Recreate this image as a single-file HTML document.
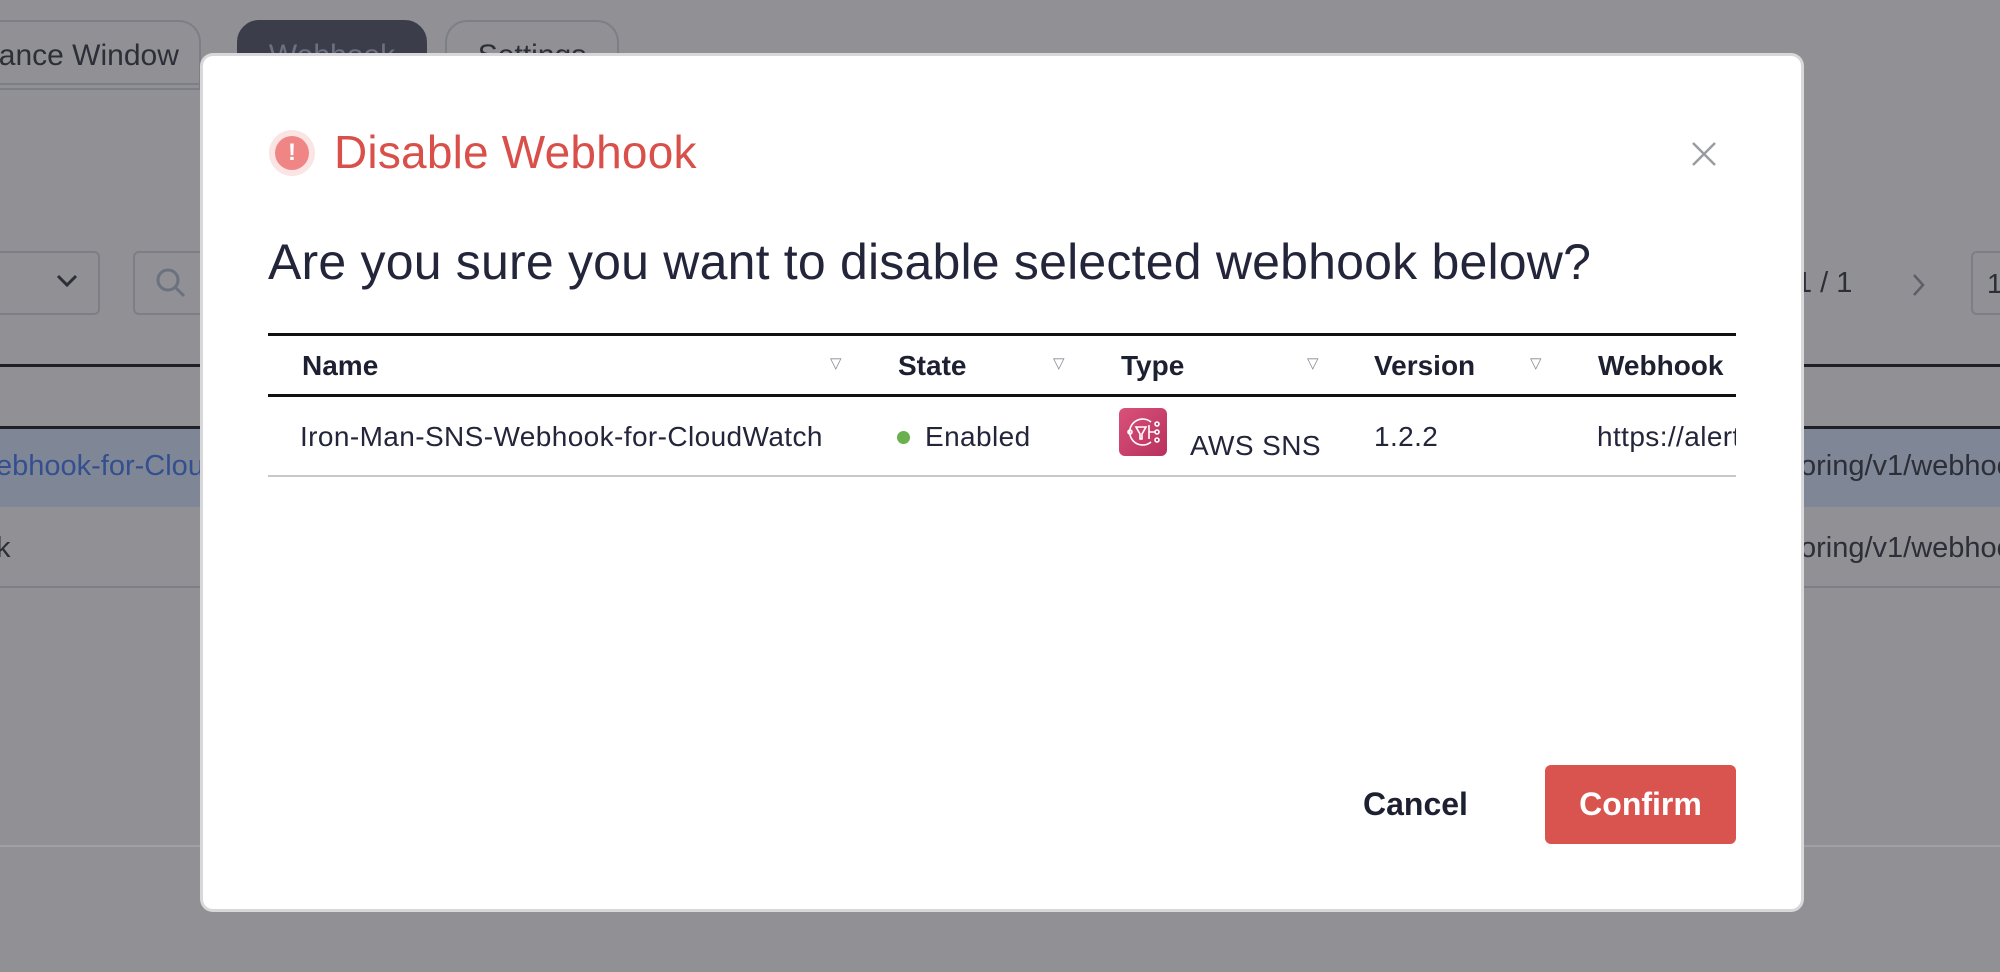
<!DOCTYPE html>
<html><head><meta charset="utf-8"><style>
*{margin:0;padding:0;box-sizing:border-box}
body{width:2000px;height:972px;overflow:hidden;background:#909095;font-family:"Liberation Sans",sans-serif;position:relative;color:#23263a}
.a{position:absolute;white-space:nowrap}
.tab{position:absolute;top:20px;height:70px;border:2px solid #7d7f86;border-radius:22px 22px 0 0;font-size:30px;color:#2c2e38;padding:17px 0 0 0;text-align:center}
.bgline{position:absolute;left:0;width:2000px}
.modal{position:absolute;left:203px;top:56px;width:1598px;height:853px;background:#fff;border-radius:10px;box-shadow:0 0 0 3px #d8d8da}
.th{position:absolute;top:350px;font-size:28px;font-weight:bold;color:#1d2030}
.tri{position:absolute;top:354px;font-size:15px;color:#8a8c96}
.td{position:absolute;top:421px;font-size:28px;color:#23263a;letter-spacing:0.4px}
</style></head><body>
<div class="tab" style="left:-40px;width:241px;border-color:#7d7f86">nance Window</div>
<div class="tab" style="left:237px;width:190px;background:#3b3d4a;border-color:#3b3d4a;color:#6d7080">Webhook</div>
<div class="tab" style="left:445px;width:174px">Settings</div>
<div class="bgline" style="top:83px;height:2px;background:#7d7f86;width:203px"></div>
<div class="a" style="left:-10px;top:251px;width:110px;height:64px;border:2px solid #7d7f86;border-radius:6px"></div>
<svg class="a" style="left:55px;top:273px" width="24" height="16"><path d="M3 3l9 9 9-9" stroke="#2c2e38" stroke-width="3" fill="none"/></svg>
<div class="a" style="left:133px;top:251px;width:90px;height:64px;border:2px solid #7d7f86;border-radius:6px"></div>
<svg class="a" style="left:154px;top:266px" width="40" height="40"><circle cx="14" cy="14" r="10" stroke="#6d7080" stroke-width="3" fill="none"/><path d="M21 21l9 9" stroke="#6d7080" stroke-width="3"/></svg>
<div class="bgline" style="top:364px;height:3px;background:#1f2028"></div>
<div class="bgline" style="top:426px;height:3px;background:#1f2028"></div>
<div class="bgline" style="top:429px;height:78px;background:#7f8797"></div>
<div class="bgline" style="top:586px;height:2px;background:#7d7f86"></div>
<div class="bgline" style="top:845px;height:2px;background:#a0a0a6"></div>
<div class="a" style="left:-4px;top:450px;font-size:29px;color:#344f8f">ebhook-for-Clou</div>
<div class="a" style="left:-4px;top:532px;font-size:29px;color:#2c2e38">k</div>
<div class="a" style="left:1800px;top:450px;font-size:29px;color:#2c2e38">oring/v1/webhook</div>
<div class="a" style="left:1800px;top:532px;font-size:29px;color:#2c2e38">oring/v1/webhook</div>
<div class="a" style="left:1796px;top:267px;font-size:29px;color:#2c2e38">1 / 1</div>
<svg class="a" style="left:1911px;top:272px" width="16" height="26"><path d="M3 3l9 10-9 10" stroke="#5d5f68" stroke-width="2.5" fill="none"/></svg>
<div class="a" style="left:1971px;top:251px;width:60px;height:64px;border:2px solid #7d7f86;border-radius:6px;font-size:28px;padding:15px 0 0 14px;color:#2c2e38">1</div>

<div class="modal"></div>
<div class="a" style="left:269px;top:130px;width:46px;height:46px;border-radius:50%;background:#fbe4e4"></div>
<div class="a" style="left:275px;top:136px;width:34px;height:34px;border-radius:50%;background:#ef8585;color:#fff;font-weight:bold;font-size:24px;text-align:center;line-height:34px">!</div>
<div class="a" style="left:334px;top:125px;font-size:46px;color:#d9504a;letter-spacing:0.2px">Disable Webhook</div>
<svg class="a" style="left:1690px;top:140px" width="28" height="28"><path d="M3 3l22 22M25 3L3 25" stroke="#9a9ca4" stroke-width="2.5"/></svg>
<div class="a" style="left:268px;top:233px;font-size:50px;color:#23263a;letter-spacing:0.2px">Are you sure you want to disable selected webhook below?</div>

<div class="a" style="left:268px;top:333px;width:1468px;height:3px;background:#111"></div>
<div class="a" style="left:268px;top:394px;width:1468px;height:3px;background:#111"></div>
<div class="a" style="left:268px;top:475px;width:1468px;height:2px;background:#c8c8cc"></div>
<div class="th" style="left:302px">Name</div><div class="tri" style="left:830px">▽</div>
<div class="th" style="left:898px">State</div><div class="tri" style="left:1053px">▽</div>
<div class="th" style="left:1121px">Type</div><div class="tri" style="left:1307px">▽</div>
<div class="th" style="left:1374px">Version</div><div class="tri" style="left:1530px">▽</div>
<div class="th" style="left:1598px">Webhook</div>
<div class="td" style="left:300px">Iron-Man-SNS-Webhook-for-CloudWatch</div>
<div class="a" style="left:897px;top:431px;width:13px;height:13px;border-radius:50%;background:#6ab04c"></div>
<div class="td" style="left:925px">Enabled</div>
<svg class="a" style="left:1119px;top:408px" width="48" height="48" viewBox="0 0 48 48"><defs><linearGradient id="g" x1="0" y1="0" x2="1" y2="1"><stop offset="0" stop-color="#d9527a"/><stop offset="1" stop-color="#b8305e"/></linearGradient></defs><rect width="48" height="48" rx="6" fill="url(#g)"/><g stroke="#fff" stroke-width="1.6" fill="none"><path d="M32 14a13 13 0 1 0 0 20"/><circle cx="11" cy="24" r="2"/><path d="M17 19h10l-4 7v5h-2v-5z"/><path d="M30 17v14M30 24h6"/><circle cx="38" cy="16" r="2"/><circle cx="38" cy="24" r="2"/><circle cx="38" cy="32" r="2"/></g></svg>
<div class="td" style="left:1190px;top:430px">AWS SNS</div>
<div class="td" style="left:1374px">1.2.2</div>
<div class="a" style="left:1597px;top:421px;width:139px;overflow:hidden;font-size:28px;letter-spacing:0.4px">https://alertmanager</div>

<div class="a" style="left:1363px;top:786px;font-size:32px;font-weight:bold;color:#1d2030">Cancel</div>
<div class="a" style="left:1545px;top:765px;width:191px;height:79px;border-radius:6px;background:#d9534f;color:#fff;font-size:32px;font-weight:bold;text-align:center;line-height:79px">Confirm</div>
</body></html>
